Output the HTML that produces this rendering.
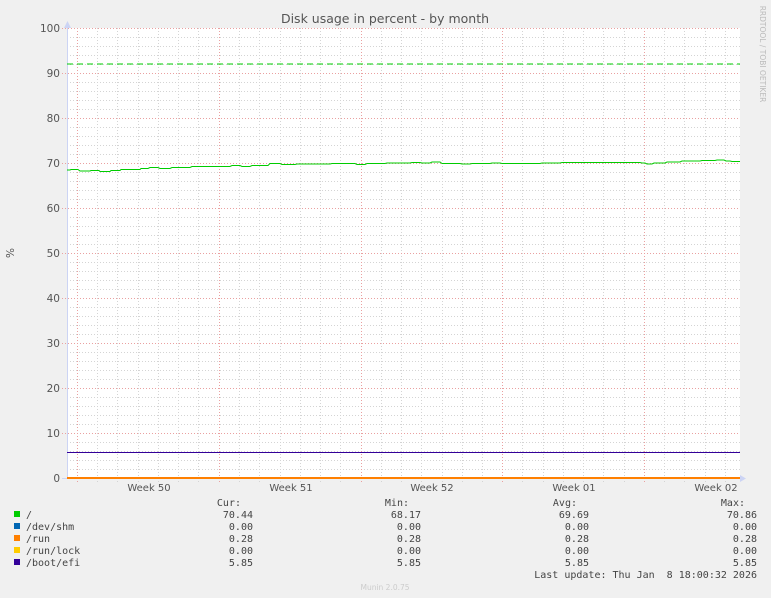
<!DOCTYPE html>
<html><head><style>html,body{margin:0;padding:0;background:#f0f0f0;width:771px;height:598px;overflow:hidden}</style></head><body>
<svg width="771" height="598" xmlns="http://www.w3.org/2000/svg" font-family="DejaVu Sans, Liberation Sans, sans-serif">
<rect x="67" y="28" width="673" height="450" fill="#fff"/>
<g stroke="#d4d4d4" stroke-dasharray="1,2">
<line x1="67" y1="37.5" x2="740" y2="37.5"/><line x1="67" y1="46.5" x2="740" y2="46.5"/><line x1="67" y1="55.5" x2="740" y2="55.5"/><line x1="67" y1="64.5" x2="740" y2="64.5"/>
<line x1="67" y1="82.5" x2="740" y2="82.5"/><line x1="67" y1="91.5" x2="740" y2="91.5"/><line x1="67" y1="100.5" x2="740" y2="100.5"/><line x1="67" y1="109.5" x2="740" y2="109.5"/>
<line x1="67" y1="127.5" x2="740" y2="127.5"/><line x1="67" y1="136.5" x2="740" y2="136.5"/><line x1="67" y1="145.5" x2="740" y2="145.5"/><line x1="67" y1="154.5" x2="740" y2="154.5"/>
<line x1="67" y1="172.5" x2="740" y2="172.5"/><line x1="67" y1="181.5" x2="740" y2="181.5"/><line x1="67" y1="190.5" x2="740" y2="190.5"/><line x1="67" y1="199.5" x2="740" y2="199.5"/>
<line x1="67" y1="217.5" x2="740" y2="217.5"/><line x1="67" y1="226.5" x2="740" y2="226.5"/><line x1="67" y1="235.5" x2="740" y2="235.5"/><line x1="67" y1="244.5" x2="740" y2="244.5"/>
<line x1="67" y1="262.5" x2="740" y2="262.5"/><line x1="67" y1="271.5" x2="740" y2="271.5"/><line x1="67" y1="280.5" x2="740" y2="280.5"/><line x1="67" y1="289.5" x2="740" y2="289.5"/>
<line x1="67" y1="307.5" x2="740" y2="307.5"/><line x1="67" y1="316.5" x2="740" y2="316.5"/><line x1="67" y1="325.5" x2="740" y2="325.5"/><line x1="67" y1="334.5" x2="740" y2="334.5"/>
<line x1="67" y1="352.5" x2="740" y2="352.5"/><line x1="67" y1="361.5" x2="740" y2="361.5"/><line x1="67" y1="370.5" x2="740" y2="370.5"/><line x1="67" y1="379.5" x2="740" y2="379.5"/>
<line x1="67" y1="397.5" x2="740" y2="397.5"/><line x1="67" y1="406.5" x2="740" y2="406.5"/><line x1="67" y1="415.5" x2="740" y2="415.5"/><line x1="67" y1="424.5" x2="740" y2="424.5"/>
<line x1="67" y1="442.5" x2="740" y2="442.5"/><line x1="67" y1="451.5" x2="740" y2="451.5"/><line x1="67" y1="460.5" x2="740" y2="460.5"/><line x1="67" y1="469.5" x2="740" y2="469.5"/>
</g>
<g stroke="#d4d4d4" stroke-dasharray="1,2">
<line x1="97.5" y1="28" x2="97.5" y2="482"/><line x1="117.5" y1="28" x2="117.5" y2="482"/><line x1="138.5" y1="28" x2="138.5" y2="482"/><line x1="158.5" y1="28" x2="158.5" y2="482"/><line x1="178.5" y1="28" x2="178.5" y2="482"/><line x1="198.5" y1="28" x2="198.5" y2="482"/>
<line x1="239.5" y1="28" x2="239.5" y2="482"/><line x1="259.5" y1="28" x2="259.5" y2="482"/><line x1="280.5" y1="28" x2="280.5" y2="482"/><line x1="300.5" y1="28" x2="300.5" y2="482"/><line x1="320.5" y1="28" x2="320.5" y2="482"/><line x1="340.5" y1="28" x2="340.5" y2="482"/>
<line x1="381.5" y1="28" x2="381.5" y2="482"/><line x1="401.5" y1="28" x2="401.5" y2="482"/><line x1="421.5" y1="28" x2="421.5" y2="482"/><line x1="442.5" y1="28" x2="442.5" y2="482"/><line x1="462.5" y1="28" x2="462.5" y2="482"/><line x1="482.5" y1="28" x2="482.5" y2="482"/>
<line x1="522.5" y1="28" x2="522.5" y2="482"/><line x1="543.5" y1="28" x2="543.5" y2="482"/><line x1="563.5" y1="28" x2="563.5" y2="482"/><line x1="583.5" y1="28" x2="583.5" y2="482"/><line x1="603.5" y1="28" x2="603.5" y2="482"/><line x1="624.5" y1="28" x2="624.5" y2="482"/>
<line x1="664.5" y1="28" x2="664.5" y2="482"/><line x1="684.5" y1="28" x2="684.5" y2="482"/><line x1="705.5" y1="28" x2="705.5" y2="482"/><line x1="725.5" y1="28" x2="725.5" y2="482"/>
</g>
<g stroke="#eaa0a0" stroke-dasharray="1,2">
<line x1="62" y1="28.5" x2="740" y2="28.5"/><line x1="62" y1="73.5" x2="740" y2="73.5"/><line x1="62" y1="118.5" x2="740" y2="118.5"/><line x1="62" y1="163.5" x2="740" y2="163.5"/><line x1="62" y1="208.5" x2="740" y2="208.5"/><line x1="62" y1="253.5" x2="740" y2="253.5"/><line x1="62" y1="298.5" x2="740" y2="298.5"/><line x1="62" y1="343.5" x2="740" y2="343.5"/><line x1="62" y1="388.5" x2="740" y2="388.5"/><line x1="62" y1="433.5" x2="740" y2="433.5"/>
<line x1="77.5" y1="28" x2="77.5" y2="482"/><line x1="219.5" y1="28" x2="219.5" y2="482"/><line x1="361.5" y1="28" x2="361.5" y2="482"/><line x1="502.5" y1="28" x2="502.5" y2="482"/><line x1="644.5" y1="28" x2="644.5" y2="482"/>
</g>
<line x1="67.5" y1="24" x2="67.5" y2="479" stroke="#ccd4f4"/>
<line x1="62" y1="478.5" x2="744" y2="478.5" stroke="#ccd4f4"/>
<polygon points="64,28 71,28 67.5,21" fill="#ccd4f4"/>
<polygon points="740,475 740,482 746,478.5" fill="#ccd4f4"/>
<line x1="67" y1="64" x2="740" y2="64" stroke="#00cc00" stroke-dasharray="6,4"/>
<polyline fill="none" stroke="#00cc00" points="67,170 70,170 71,169.5 78,169.5 80,171 90,171 91,170.5 99,170.5 100,171.5 110,171.5 111,170.5 120,170.5 121,169.5 140,169.5 141,168.5 148,168.5 150,167.5 158,167.5 160,168.5 170,168.5 172,167.5 190,167.5 192,166.5 230,166.5 232,165.5 240,165.5 242,166.5 250,166.5 252,165.5 268,165.5 270,163.5 280,163.5 282,164.5 295,164.5 297,164 330,164 332,163.5 355,163.5 357,164.5 365,164.5 367,163.5 385,163.5 387,163 410,163 412,162.5 420,162.5 422,163 430,163 432,162 440,162 442,163.5 460,163.5 462,164 470,164 472,163.5 490,163.5 492,163 500,163 502,163.5 540,163.5 542,163 560,163 562,162.5 640,162.5 642,163 645,163 647,164 652,164 654,163 665,163 667,162 680,162 682,161 700,161 702,160.5 715,160.5 717,160 724,160 726,161 730,161 732,161.5 740,161.5"/>
<line x1="67" y1="452.5" x2="740" y2="452.5" stroke="#330099"/>
<line x1="67" y1="478" x2="740" y2="478" stroke="#ff8000" stroke-width="2"/>
<g fill="#555" font-size="10.5" text-anchor="end">
<text x="60" y="32">100</text><text x="60" y="77">90</text><text x="60" y="122">80</text><text x="60" y="167">70</text><text x="60" y="212">60</text><text x="60" y="257">50</text><text x="60" y="302">40</text><text x="60" y="347">30</text><text x="60" y="392">20</text><text x="60" y="437">10</text><text x="60" y="482">0</text>
</g>
<text x="14" y="253" fill="#555" font-size="10.5" text-anchor="middle" transform="rotate(-90 14 253)">%</text>
<g fill="#555" font-size="10" text-anchor="middle">
<text x="149" y="491">Week 50</text><text x="291" y="491">Week 51</text><text x="432" y="491">Week 52</text><text x="574" y="491">Week 01</text><text x="716" y="491">Week 02</text>
</g>
<text x="385" y="23" fill="#555" font-size="12.5" text-anchor="middle">Disk usage in percent - by month</text>
<text x="760" y="54" fill="#bbb" font-size="7.5" text-anchor="middle" transform="rotate(90 760 54)">RRDTOOL / TOBI OETIKER</text>
<g font-family="DejaVu Sans Mono, Liberation Mono, monospace" font-size="10" fill="#444">
<text x="241" y="506" text-anchor="end">Cur:</text><text x="409" y="506" text-anchor="end">Min:</text><text x="577" y="506" text-anchor="end">Avg:</text><text x="745" y="506" text-anchor="end">Max:</text>
<rect x="14" y="511" width="6" height="6" fill="#00cc00"/><rect x="14" y="523" width="6" height="6" fill="#0066b3"/><rect x="14" y="535" width="6" height="6" fill="#ff8000"/><rect x="14" y="547" width="6" height="6" fill="#ffcc00"/><rect x="14" y="559" width="6" height="6" fill="#330099"/>
<text x="26" y="518">/</text><text x="26" y="530">/dev/shm</text><text x="26" y="542">/run</text><text x="26" y="554">/run/lock</text><text x="26" y="566">/boot/efi</text>
<g text-anchor="end">
<text x="253" y="518">70.44</text><text x="253" y="530">0.00</text><text x="253" y="542">0.28</text><text x="253" y="554">0.00</text><text x="253" y="566">5.85</text>
<text x="421" y="518">68.17</text><text x="421" y="530">0.00</text><text x="421" y="542">0.28</text><text x="421" y="554">0.00</text><text x="421" y="566">5.85</text>
<text x="589" y="518">69.69</text><text x="589" y="530">0.00</text><text x="589" y="542">0.28</text><text x="589" y="554">0.00</text><text x="589" y="566">5.85</text>
<text x="757" y="518">70.86</text><text x="757" y="530">0.00</text><text x="757" y="542">0.28</text><text x="757" y="554">0.00</text><text x="757" y="566">5.85</text>
<text x="757" y="578" xml:space="preserve">Last update: Thu Jan  8 18:00:32 2026</text>
</g>
</g>
<text x="385" y="590" fill="#ccc" font-size="7.5" text-anchor="middle">Munin 2.0.75</text>
</svg>
</body></html>
